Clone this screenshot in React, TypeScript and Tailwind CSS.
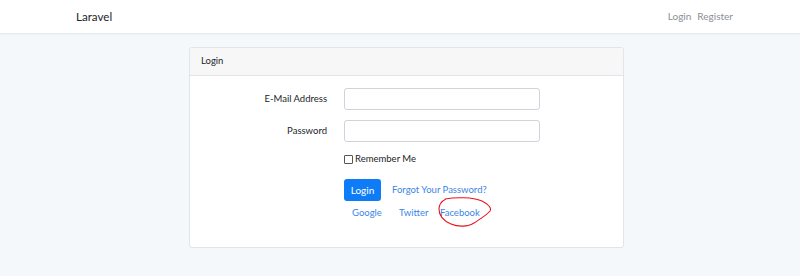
export default function App() {
  return (
    <div className="min-h-screen bg-[#f5f8fa] font-['Lato','Noto_Sans',sans-serif] text-[9.5px] text-[#212529]">
      {/* Navbar */}
      <nav className="h-[34px] bg-white border-b border-[#e8ebee] shadow-[0_1px_2px_rgba(0,0,0,0.03)]">
        <div className="flex h-[33px] items-center justify-between pl-[76px] pr-[67px]">
          <span className="text-[11.6px] text-[#212529]">Laravel</span>
          <div className="flex gap-[6px] text-[10px] text-[#8a8f94]">
            <span>Login</span>
            <span>Register</span>
          </div>
        </div>
      </nav>

      {/* Card */}
      <div className="pt-[13px]">
        <div className="ml-[189px] w-[435px] rounded-[3px] border border-[#e1e4e8] bg-white">
          <div className="h-[28px] flex items-center pl-[11px] bg-[#f7f7f7] border-b border-[#e1e4e8] rounded-t-[3px]">
            Login
          </div>
          <div className="pt-[12px] pb-[26px]">
            <div className="grid grid-cols-[137px_196px] gap-x-[17px] items-center">
              <label className="text-right h-[22px] leading-[22px]">E-Mail Address</label>
              <div className="h-[22px] rounded-[3px] border border-[#ced4da] bg-white" />

              <label className="mt-[10px] text-right h-[22px] leading-[22px]">Password</label>
              <div className="mt-[10px] h-[22px] rounded-[3px] border border-[#ced4da] bg-white" />

              <div />
              <div className="mt-[10px] flex items-center gap-[2px] h-[14px]">
                <span className="inline-block w-[9px] h-[9px] border border-[#555] rounded-[1px] bg-white" />
                <span>Remember Me</span>
              </div>

              <div />
              <div className="mt-[13px] flex items-center">
                <button className="h-[22px] w-[37px] rounded-[3px] bg-[#0f7cf7] text-white text-[10px]">
                  Login
                </button>
                <span className="ml-[11px] text-[#3c86e6]">Forgot Your Password?</span>
              </div>

              <div />
              <div className="mt-[4px] flex items-center h-[16px] text-[#3c86e6]">
                <span className="ml-[8px] inline-block w-[47px]">Google</span>
                <span className="inline-block w-[41px]">Twitter</span>
                <span className="relative">
                  Facebook
                  <svg
                    className="absolute left-[-2px] top-[-9px] overflow-visible"
                    width="54"
                    height="30"
                    viewBox="0 0 54 30"
                    fill="none"
                  >
                    <path
                      d="M7 2 C 18 0, 34 0, 44 4 C 50 7, 54 11, 52 14 C 49 18, 42 22, 36 26 C 30 30, 20 30, 13 27 C 6 24, 1 19, 1 12 C 1 7, 4 4, 8 2"
                      stroke="#e8141c"
                      strokeWidth="1.1"
                    />
                  </svg>
                </span>
              </div>
            </div>
          </div>
        </div>
      </div>
    </div>
  );
}
